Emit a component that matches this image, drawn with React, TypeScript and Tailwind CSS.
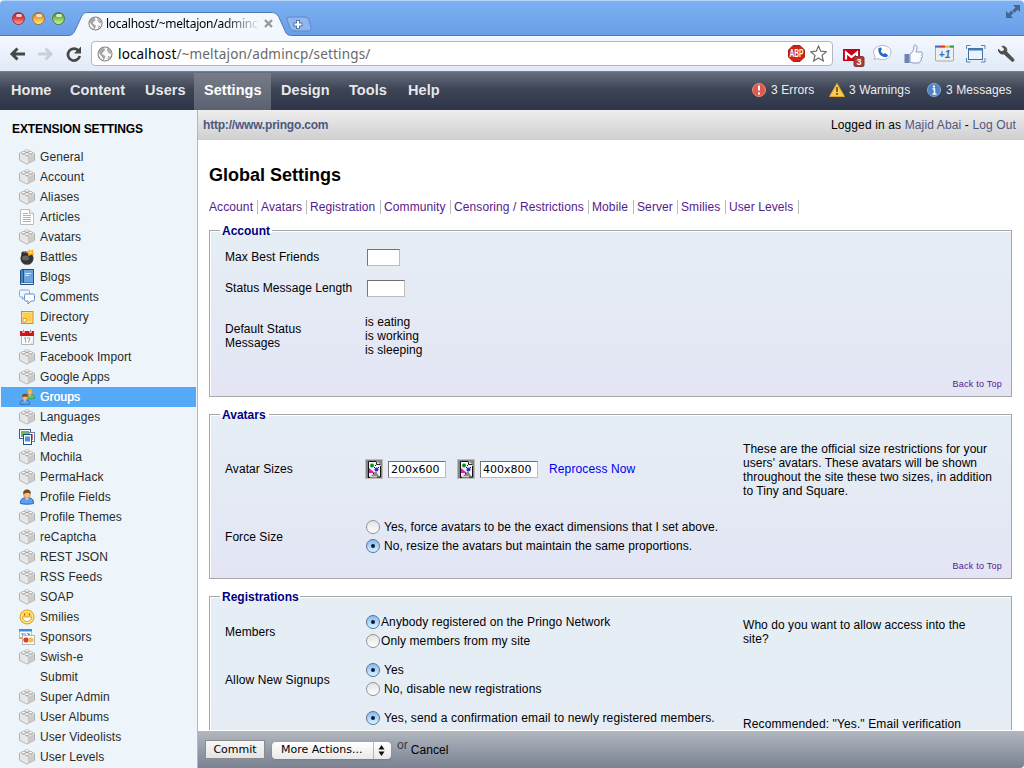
import React from "react";

function Brick() {
  return (
    <svg width="16" height="16" viewBox="0 0 16 16">
      <path d="M8 1 15.400 4.300v7L8 15 .6 11.300v-7Z" fill="#f2f2f2" stroke="#a2a2a2" strokeWidth=".9" strokeLinejoin="round" />
      <path d="M8 7.600v7L1.100 11V4.600Z" fill="#e6e6e6" />
      <path d="M8 7.600v7l6.900-3.600V4.600Z" fill="#cbcbcb" />
      <path d="M1 4.400 8 7.700l7-3.300M8 7.700v6.500" fill="none" stroke="#fff" strokeWidth=".7" />
      {[[8, 2], [4.4, 3.8], [11.6, 3.8], [8, 5.5]].map(([x, y]) => (
        <g key={`${x}-${y}`}>
          <ellipse cx={x} cy={y + 0.7} rx="2" ry="1.300" fill="#a0a0a0" />
          <ellipse cx={x} cy={y - 0.2} rx="1.900" ry="1.200" fill="#fdfdfd" stroke="#a5a5a5" strokeWidth=".5" />
        </g>
      ))}
    </svg>
  );
}

function Person({ x = 0, y = 0, s = 1, hair = "#7a4a22", body = "#5aa0ee", edge = "#2a62bd" }) {
  return (
    <g transform={`translate(${x} ${y}) scale(${s})`}>
      <path d="M1.500 14.500c0-4 1.600-5.500 4-5.500h5c2.400 0 4 1.500 4 5.500-3 .9-10 .9-13 0Z" fill={body} stroke={edge} />
      <path d="m6 9 2 2 2-2" fill="#fff" />
      <ellipse cx="8" cy="5.600" rx="3.300" ry="3.800" fill="#f4bd86" stroke="#b27240" strokeWidth=".6" />
      <path d="M4.300 5.200C3.800 2 5.500.5 8 .5s4.200 1.500 3.700 4.700C10.500 3.400 6.500 4 4.300 5.200Z" fill={hair} />
    </g>
  );
}

function SideIcon({ kind }: { kind: string }) {
  if (kind === "none") return <span className="block size-4" />;
  if (kind === "brick") return <Brick />;
  return (
    <svg width="16" height="16" viewBox="0 0 16 16">
      {kind === "page" && (
        <>
          <path d="M1.500.5h9l4 4v11h-13Z" fill="#fff" stroke="#bdbdbd" />
          <path d="M10.500.5v4h4" fill="#eee" stroke="#bdbdbd" />
          <path d="M4 4.500h5M4 6.500h8M4 8.500h8M4 10.500h8M4 12.500h8" stroke="#b4b4b4" />
        </>
      )}
      {kind === "bomb" && (
        <>
          <circle cx="8" cy="9.300" r="6.500" fill="#353535" />
          <ellipse cx="6.500" cy="9" rx="3.500" ry="2.500" fill="#656565" />
          <circle cx="4.500" cy="4.600" r="2.200" fill="#2a2a2a" />
          <path d="M4.500 4.500c1-2 3-2 4-1" stroke="#666" fill="none" strokeWidth="1.200" />
          <path d="m10 0 1.500 1.500L14.500.5 14 3l1.500 2.500-3 .3L9.500 7 9 4.500 7 3l2.500-.7Z" fill="#ffad18" />
          <circle cx="11.500" cy="3.500" r="1.300" fill="#ffe352" />
        </>
      )}
      {kind === "book" && (
        <>
          <path d="M1.500 1.500 3 .5h11.500v15h-13Z" fill="#4c83bf" stroke="#234f85" />
          <path d="M5 1v12h9V1Z" fill="#6fa4db" />
          <path d="M2 14.500h12" stroke="#dfe9f4" />
          <path d="M4.500 1v13" stroke="#25568f" />
          <path d="M6 4.500h6M6 6.500h4" stroke="#d9e9fb" />
        </>
      )}
      {kind === "comments" && (
        <>
          <path d="M2 1h7q1.500 0 1.500 1.500v4q0 1.500-1.500 1.500H6l-2.500 2.500V8H2Q.5 8 .5 6.500v-4Q.5 1 2 1Z" fill="#eef6ff" stroke="#7fa8d3" />
          <path d="M7 5h7q1.500 0 1.500 1.500v4q0 1.500-1.500 1.500h-2l-3 3v-3H7q-1.500 0-1.500-1.500v-4Q5.500 5 7 5Z" fill="#fff" stroke="#5d8ec4" />
        </>
      )}
      {kind === "note" && (
        <>
          <rect x="2.500" y="2.500" width="11.500" height="12" fill="#fbe08a" stroke="#df8b17" />
          <path d="M4 4h8.500v8.500H7L4 9.500Z" fill="#ffcc4a" />
          <path d="M4 9.500h3V13H4Z" fill="#fff" stroke="#e59b25" />
        </>
      )}
      {kind === "calendar" && (
        <>
          <path d="M2.500 4v11.500h12V4Z" fill="#fbfbfb" stroke="#b5b5b5" />
          <path d="M1 2h14v5H1Z" fill="#d3131b" />
          <path d="M4.500 0v4M11.500 0v4" stroke="#fff" strokeWidth="2" />
          <path d="M4.500 .5v3M11.500 .5v3" stroke="#777" strokeWidth=".8" />
          <path d="m5 9.500 1.500-1v5M8 9h3l-1.500 4.500" fill="none" stroke="#a5a5a5" />
          <path d="m11 15.500 4-4" stroke="#ccc" />
        </>
      )}
      {kind === "groups" && (
        <>
          <Person x={5.5} y={-0.5} s={0.68} hair="#f0b41e" body="#6cc05e" edge="#348a3a" />
          <Person x={0} y={4.5} s={0.74} />
        </>
      )}
      {kind === "person" && <Person />}
      {kind === "media" && (
        <>
          <rect x=".5" y=".5" width="11" height="9" fill="#f4f8ff" stroke="#345c99" />
          <path d="M2 2h8v6H2Z" fill="#73b368" />
          <rect x="10" y="3.500" width="5.500" height="9" fill="#fff" stroke="#6681ad" />
          <path d="M12 5h2v6h-2Z" fill="#e07879" />
          <rect x="4.500" y="5.500" width="8" height="10" fill="#fff" stroke="#244e91" />
          <path d="M6 7.500h5v5H6Z" fill="#4c91d0" />
        </>
      )}
      {kind === "smile" && (
        <>
          <circle cx="8" cy="8" r="7" fill="#ffd34c" stroke="#df9a12" />
          <circle cx="8" cy="8" r="5.800" fill="none" stroke="#ffed99" />
          <path d="M3.500 8h9c0 6-9 6-9 0Z" fill="#fff" stroke="#c98a25" strokeWidth=".7" />
          <path d="M5.500 4.500v2M10.500 4.500v2" stroke="#906018" />
        </>
      )}
      {kind === "cards" && (
        <>
          <rect x=".5" y=".5" width="12" height="9" fill="#fff" stroke="#c9c2ae" />
          <path d="M0 0h13v2.500H0Z" fill="#3e8de2" />
          <path d="M0 8h4v2H0Z" fill="#eba93a" />
          <path d="m2.500 4 1 2 1-2M6 4v2.500M8 4.500h1.500M9 6.500l1-2 1 2" stroke="#4f70a7" fill="none" strokeWidth=".8" />
          <rect x="3.500" y="6.500" width="12" height="9" fill="#fff" stroke="#b7b7b7" />
          <rect x="4.500" y="8.500" width="5" height="5" rx="1.800" fill="#e9372b" />
          <rect x="9.500" y="8.500" width="5" height="5" rx="1.800" fill="#f7c23d" />
        </>
      )}
    </svg>
  );
}

const sideItems: [string, string][] = [
  ["General", "brick"], ["Account", "brick"], ["Aliases", "brick"], ["Articles", "page"], ["Avatars", "brick"],
  ["Battles", "bomb"], ["Blogs", "book"], ["Comments", "comments"], ["Directory", "note"], ["Events", "calendar"],
  ["Facebook Import", "brick"], ["Google Apps", "brick"], ["Groups", "groups"], ["Languages", "brick"], ["Media", "media"],
  ["Mochila", "brick"], ["PermaHack", "brick"], ["Profile Fields", "person"], ["Profile Themes", "brick"], ["reCaptcha", "brick"],
  ["REST JSON", "brick"], ["RSS Feeds", "brick"], ["SOAP", "brick"], ["Smilies", "smile"], ["Sponsors", "cards"],
  ["Swish-e", "brick"], ["Submit", "none"], ["Super Admin", "brick"], ["User Albums", "brick"], ["User Videolists", "brick"], ["User Levels", "brick"],
];

function Globe({ size }: { size: number }) {
  return (
    <svg width={size} height={size} viewBox="0 0 16 16" className="shrink-0">
      <circle cx="8" cy="8" r="7" fill="#fafafa" stroke="#808080" strokeWidth="1.100" />
      <path d="m2.500 4 2.500-2 2.500.5.5 2-2 1.500-1 1.500 1.500 1.500 2 1-.5 2-1.500 2.500-1-3-2-2.500-1.500-2Z" fill="#a5a5a5" />
      <path d="m10 2 3 2 1.500 3-1.500 1-2-1.500-1-2ZM11 10l2.500.5-2 2.500-1 .5Z" fill="#b0b0b0" />
    </svg>
  );
}

function TrafficLight({ color }: { color: "red" | "yellow" | "green" }) {
  const c = {
    red: "border-[#96343d] from-[#a7202d] via-[#e5404a] to-[#ff9c99]",
    yellow: "border-[#a17530] from-[#b0721d] via-[#f4ad3c] to-[#ffe77d]",
    green: "border-[#4d7f3c] from-[#44812a] via-[#82c44e] to-[#ccf59a]",
  }[color];
  return (
    <span className={`flex size-[13px] justify-center rounded-full border bg-linear-to-b ${c}`}>
      <span className="mt-px h-[3px] w-[6px] rounded-full bg-white/75" />
    </span>
  );
}

function Chrome() {
  return (
    <header className="shrink-0 font-['Noto_Sans','Open_Sans',sans-serif]">
      <div className="relative flex h-9 items-start rounded-t-[4px] border-t border-[#b4d4fa] bg-linear-to-b from-[#7db0f3] to-[#699fe8]">
        <div className="ml-[12px] mt-[11px] flex gap-[7px]">
          <TrafficLight color="red" />
          <TrafficLight color="yellow" />
          <TrafficLight color="green" />
        </div>
        <svg className="absolute left-0 top-0" width="1024" height="36">
          <path d="M0 34.500h68c5 0 6-3 8-7l5-11c2-4 3-5 7-5h183c4 0 6 1 8 5l5 11c2 5 3 7 8 7h732v1.500H0Z" fill="#f3f7fe" stroke="#4d78b5" />
          <path d="M0 35.500h1024" stroke="#f5f8fe" strokeWidth="1" />
          <path d="M289 16h16q3 0 4 3l2 7q1 4-3 4h-13q-4 0-5-3l-3-8q-1-3 2-3Z" fill="#8fb7ee" stroke="#5b89c8" />
          <path d="M298 19v9M293.500 23.500h9" stroke="#5476a6" strokeWidth="4" />
          <path d="M298 20v7M294.500 23.500h7" stroke="#fff" strokeWidth="2" />
          <g fill="#46658f">
            <path d="M1013 4h7v7l-2.300-2.300-3 3-2.300-2.300 3-3Z" />
            <path d="M1006 10v7h7l-2.300-2.300 3-3-2.300-2.300-3 3Z" />
          </g>
        </svg>
        <div className="absolute left-[88px] top-[14px] flex h-[17px] w-[187px] items-center text-[12px] leading-[17px]">
          <Globe size={15} />
          <span className="ml-[3px] w-[155px] overflow-hidden bg-linear-to-r from-black from-75% to-transparent bg-clip-text tracking-[-0.250px] whitespace-nowrap text-transparent">localhost/~meltajon/adminc</span>
          <svg width="9" height="9" viewBox="0 0 9 9" className="ml-[3px] shrink-0"><path d="m1 1 7 7M8 1 1 8" stroke="#979797" strokeWidth="2.200" /></svg>
        </div>
      </div>
      <div className="flex h-[35px] items-center bg-linear-to-b from-[#f4f8ff] to-[#e1eaf8] pl-[9px]">
        <svg width="75" height="22" viewBox="0 0 75 22" fill="none" strokeWidth="3">
          <path d="M16 11H3M8.500 5.500 3 11l5.500 5.500" stroke="#474747" />
          <path d="M29 11h13M36.500 5.500 42 11l-5.500 5.500" stroke="#cbd0d7" />
          <path d="M69.800 8a6 6 0 1 0 1 5" stroke="#474747" strokeWidth="2.700" />
          <path d="M72 3.500v7h-7Z" fill="#474747" />
        </svg>
        <div className="ml-[7px] flex h-[25px] w-[742px] items-center rounded-[4px] border border-[#b2b8c1] bg-white pl-[5px] pr-[5px]">
          <Globe size={16} />
          <span className="ml-[5px] grow text-[13.500px] leading-5 tracking-[0.160px] text-[#686868]"><span className="text-black">localhost</span>/~meltajon/admincp/settings/</span>
          <svg width="17" height="17" viewBox="0 0 17 17">
            <path d="M5 .5h7L16.500 5v7L12 16.500H5L.5 12V5Z" fill="#ce2516" stroke="#af2014" />
            <text x="8.500" y="12.300" textAnchor="middle" fill="white" fontSize="10.500" fontWeight="700" textLength="14" lengthAdjust="spacingAndGlyphs" fontFamily="Liberation Sans, sans-serif">ABP</text>
          </svg>
          <svg width="17" height="17" viewBox="0 0 17 17" className="ml-[5px]"><path d="m8.500 1 2.200 5.200 5.600.5-4.300 3.700 1.300 5.500-4.800-3-4.800 3 1.300-5.500L.7 6.700l5.600-.5Z" fill="white" stroke="#6d6d6d" strokeWidth="1.200" /></svg>
        </div>
        <svg width="181" height="28" viewBox="0 0 181 28" className="ml-[10px]">
          <rect x="0" y="9" width="17" height="12" fill="#c70017" />
          <path d="M3 19.500v-7l5.500 4.500 5.500-4.500v7" fill="none" stroke="#fff" strokeWidth="2.200" />
          <rect x="11" y="16.500" width="10" height="10" rx="1.500" fill="#ab3a3a" stroke="#873030" />
          <text x="16" y="25" textAnchor="middle" fill="#fff" fontSize="9" fontWeight="700" fontFamily="Liberation Sans, sans-serif">3</text>
          <path d="M39.500 5.500c5 0 8.500 3 8.500 7s-3.500 7-8.500 7c-2 0-3-.3-4.500-1l-4 1 1.300-3c-4.300-5-.3-11 7.200-11Z" fill="#fff" stroke="#b0b8c6" />
          <path d="M35.500 8c-1 6 3 9.500 8.500 9l1-2-3-2-1.300 1q-2.500-1-3-3.500l1.300-1-1-2Z" fill="#236acb" />
          <path d="M61.500 14h5v9h-5Z" fill="#6d82b1" />
          <path d="M67 14c3-2 4-4 4-8 0-2 3-1 3 1 0 3-.7 4-1 5h5c2 0 2 3 .5 3 1.500 1 1 3-.5 3 1 2 0 3-1 3 .5 1 0 2-2 2h-5l-3-1Z" fill="#f8faff" stroke="#8c9dbe" />
          <path d="M92.500 7h18v13q0 1-1 1h-16q-1 0-1-1Z" fill="#eee" stroke="#aaa" />
          <path d="M92 5.500h5v2h-5Z" fill="#3770d2" /><path d="M97 5.500h5v2h-5Z" fill="#d53531" /><path d="M102 5.500h5v2h-5Z" fill="#f2bc22" /><path d="M107 5.500h4v2h-4Z" fill="#2d9650" />
          <text x="101.500" y="18" textAnchor="middle" fill="#326bc4" fontSize="10" fontStyle="italic" fontWeight="700" fontFamily="Liberation Sans, sans-serif">+1</text>
          <rect x="125.500" y="8.500" width="14" height="11" fill="#e9f4ff" stroke="#426f9d" />
          <path d="M125 9.500h15" stroke="#497aac" strokeWidth="2" />
          <path d="M123.500 9V5.500h4M138 5.500h4V9M123.500 18v4h4M138 22h4v-4" fill="none" stroke="#5686b6" />
          <path d="m163 13-1.200 1.200 7.500 6.900c1.300 1.200 3-.7 1.800-2l-7-7.300c1-3-1-6.300-4.600-5.500l2.700 2.800-1 2-2.700.6-2.500-2.500c-.5 3 2.500 5.500 5 4.800Z" fill="#4e4e4e" stroke="#4e4e4e" transform="translate(-.5)" />
        </svg>
      </div>
    </header>
  );
}

function NavItem({ label, className, active = false }: { label: string; className: string; active?: boolean }) {
  return <a className={`flex items-center pl-[10px] pb-px text-[14.500px] font-bold tracking-[0.050px] ${className} ${active ? "bg-linear-to-b from-[#767d88] to-[#5b6170] text-white" : "text-[#e7e7e8]"}`}>{label}</a>;
}

function StatusIcon({ kind }: { kind: "error" | "warning" | "info" }) {
  return (
    <svg width="16" height="16" viewBox="0 0 16 16" className="mt-px">
      {kind === "warning" ? <><path d="M8 1.500 15.500 14.500H.5Z" fill="#f9cd4b" stroke="#e0a72b" strokeLinejoin="round" /><path d="M8 5v5M8 11v2" stroke="#665532" strokeWidth="1.700" /></> :
        <><circle cx="8" cy="8" r="6.500" fill={kind === "error" ? "#df594c" : "#4b84c6"} stroke={kind === "error" ? "#ef8b7c" : "#86aadb"} />{kind === "error" ? <path d="M8 3.500v5M8 10.500v2" stroke="#fff" strokeWidth="2" /> : <><path d="M8 3.500v2" stroke="#fff" strokeWidth="2" /><path d="M6.500 7h2v5M6.500 12h4" fill="none" stroke="#fff" strokeWidth="1.500" /></>}</>}
    </svg>
  );
}

function Radio({ on = false }: { on?: boolean }) {
  return (
    <span className={`flex size-[14px] shrink-0 items-center justify-center rounded-full border ${on ? "border-[#56719b] bg-linear-to-b from-[#89b9ef] to-[#d6f3ff]" : "border-[#929292] bg-linear-to-b from-[#e3e3e3] to-white"}`}>
      {on && <span className="size-1 rounded-full bg-[#101c34]" />}
    </span>
  );
}

function Choice({ on = false, tight = false, children }: { on?: boolean; tight?: boolean; children: React.ReactNode }) {
  return <label className={`flex h-[19px] items-center whitespace-nowrap pl-px last:mb-[2px] ${tight ? "gap-px tracking-[0.100px]" : "gap-1"}`}><Radio on={on} />{children}</label>;
}

function Panel({ title, legend, className, back = true, children }: { title: string; legend: string; className: string; back?: boolean; children: React.ReactNode }) {
  return (
    <section className={`relative shrink-0 border border-[#a6a6a6] ${className}`}>
      <h2 className={`absolute -top-2 left-[10px] h-4 bg-linear-to-b from-white from-[10px] to-transparent to-[10px] pl-[2px] leading-4 font-bold whitespace-nowrap text-[#000080] ${legend}`}>{title}</h2>
      <div className="flex h-full flex-col border-t border-l border-white bg-linear-to-b from-[#e6eef5] to-[#e3e5f4] pt-[10px] pl-[14px]">{children}</div>
      {back && <a className="absolute right-[9px] bottom-[6px] text-[9px] leading-3 tracking-[0.250px] text-[#551a8b]">Back to Top</a>}
    </section>
  );
}

function Row({ label, help, className, children }: { label: React.ReactNode; help?: React.ReactNode; className: string; children: React.ReactNode }) {
  return (
    <div className={`grid grid-cols-[140px_378px_262px] items-center leading-[14px] tracking-[0.060px] ${className}`}>
      <div>{label}</div><div>{children}</div><div>{help}</div>
    </div>
  );
}

const field = "border border-[#bdbdbd] border-t-[#707070] border-l-[#777] bg-white";

function SizeButton() {
  return (
    <svg width="18" height="20" viewBox="0 0 18 20">
      <path d="M0 0h18v20H0Z" fill="#bdbdbd" />
      <path d="M1 1h16v18H1Z" fill="#858585" />
      <path d="M3 2h9l4 4v12H3Z" fill="#c9c9c9" />
      <path d="M3.500 18V2.500H11M15.500 7v11H12M5 18.500H3" fill="none" stroke="#111" />
      <path d="M4 3h8l3 3v11H4Z" fill="#f4f4f4" />
      <path d="M11.500 2.500v3h4" fill="#ddd" stroke="#222" />
      <circle cx="7" cy="6.500" r="1.900" fill="#078b20" /><circle cx="11.500" cy="10.500" r="2" fill="#1739d7" /><path d="M4 9v5h6Z" fill="#ed15bc" /><path d="m6 17 5-5 3 5Z" fill="#898989" />
      <path d="M10 6h1v1h-1ZM9 8h1v1H9ZM13 8h1v1h-1ZM8 14h1v1H8Z" fill="#111" />
    </svg>
  );
}

export default function App() {
  const links: [string, string][] = [["Account", "w-[48px]"], ["Avatars", "w-[45px]"], ["Registration", "w-[70px]"], ["Community", "w-[66px]"], ["Censoring / Restrictions", "w-[134px]"], ["Mobile", "w-[41px]"], ["Server", "w-[40px]"], ["Smilies", "w-[44px]"], ["User Levels", "w-[69px]"]];
  return (
    <div className="flex h-[768px] w-[1024px] flex-col overflow-hidden bg-white font-['Liberation_Sans',Arial,sans-serif] text-[12px] text-black">
      <Chrome />
      <nav className="flex h-[39px] shrink-0 justify-between border-t border-[#777d89] bg-linear-to-b from-[#686f7d] via-[#3d4456] via-45% to-[#2f3548] pt-px pl-px">
        <div className="flex">
          <NavItem label="Home" className="w-[59px]" /><NavItem label="Content" className="w-[75px]" /><NavItem label="Users" className="w-[59px]" /><NavItem label="Settings" className="w-[77px]" active /><NavItem label="Design" className="w-[68px]" /><NavItem label="Tools" className="w-[59px]" /><NavItem label="Help" className="w-[51px]" />
        </div>
        <div className="flex items-center pb-[4px] text-[12px] tracking-[0.100px] text-[#eee]">
          <div className="flex w-[78px] gap-1"><StatusIcon kind="error" />3 Errors</div>
          <div className="flex w-[97px] gap-1"><StatusIcon kind="warning" />3 Warnings</div>
          <div className="flex w-[98px] gap-1"><StatusIcon kind="info" />3 Messages</div>
        </div>
      </nav>
      <div className="flex min-h-0 grow">
        <aside className="w-[198px] shrink-0 border-r border-[#b8b8b8] bg-[#edf5fa] pt-[11px]">
          <h2 className="mb-[10px] pl-3 text-[12px] leading-4 font-bold tracking-[-0.100px] whitespace-nowrap">EXTENSION SETTINGS</h2>
          <ul>
            {sideItems.map(([name, icon]) => (
              <li key={name} className={`ml-px mr-px flex h-5 items-center gap-[5px] pl-[18px] leading-5 tracking-[0.100px] ${name === "Groups" ? "bg-[#54aaf6] text-white [text-shadow:0.300px_0_0_white]" : "text-[#292929]"}`}><SideIcon kind={icon} />{name}</li>
            ))}
          </ul>
        </aside>
        <div className="flex min-w-0 grow flex-col">
          <div className="flex h-[30px] shrink-0 items-center justify-between bg-linear-to-b from-[#eeeeef] to-[#cfcfd0] pr-2 pl-[5px]">
            <a className="font-bold tracking-[-0.200px] text-[#4c5880]">http://www.pringo.com</a>
            <span className="tracking-[0.130px]">Logged in as <a className="text-[#4c5880]">Majid Abai</a> - <a className="text-[#4c5880]">Log Out</a></span>
          </div>
          <main className="flex min-h-0 grow flex-col overflow-hidden pl-[11px]">
            <h1 className="mt-[24px] h-[22px] shrink-0 text-[18px] leading-[22px] font-bold">Global Settings</h1>
            <div className="mt-[14px] flex h-[14px] shrink-0 tracking-[0.100px] text-[#551a8b]">
              {links.map(([name, w], i) => <a key={name} className={`box-content border-r border-[#bbb] leading-[14px] whitespace-nowrap ${i ? "pl-[3px]" : ""} ${w}`}>{name}</a>)}
            </div>
            <Panel title="Account" legend="w-[52px]" className="mt-[16px] h-[167px] w-[803px]">
              <Row className="h-[30px]" label="Max Best Friends"><div className={`ml-[2px] h-[17px] w-[33px] ${field}`} /></Row>
              <Row className="h-[32px]" label="Status Message Length"><div className={`ml-[2px] mt-px h-[17px] w-[38px] ${field}`} /></Row>
              <Row className="h-[64px]" label={<>Default Status<br />Messages</>}>is eating<br />is working<br />is sleeping</Row>
            </Panel>
            <Panel title="Avatars" legend="w-[49px]" className="mt-[17px] h-[165px] w-[803px]">
              <Row className="h-[86px]" label="Avatar Sizes" help={<div className="pt-[2px]">These are the official size restrictions for your<br />users' avatars. These avatars will be shown<br />throughout the site these two sizes, in addition<br />to Tiny and Square.</div>}>
                <div className="flex items-center font-['DejaVu_Sans',sans-serif] text-[11px] tracking-normal">
                  <SizeButton /><div className={`mr-[11px] ml-[5px] h-[17px] w-[58px] pl-[2px] leading-[15px] ${field}`}>200x600</div>
                  <SizeButton /><div className={`mr-[11px] ml-[5px] h-[17px] w-[58px] pl-[2px] leading-[15px] ${field}`}>400x800</div>
                  <a className="font-['Liberation_Sans',sans-serif] text-[12px] tracking-[0.130px] text-[#0000ee]">Reprocess Now</a>
                </div>
              </Row>
              <Row className="h-[50px]" label="Force Size"><Choice>Yes, force avatars to be the exact dimensions that I set above.</Choice><Choice on>No, resize the avatars but maintain the same proportions.</Choice></Row>
            </Panel>
            <Panel title="Registrations" legend="w-[80px]" back={false} className="mt-[17px] h-[760px] w-[803px]">
              <Row className="h-[48px]" label="Members" help={<>Who do you want to allow access into the<br />site?</>}><Choice on tight>Anybody registered on the Pringo Network</Choice><Choice tight>Only members from my site</Choice></Row>
              <Row className="h-[48px] tracking-[0.120px]" label="Allow New Signups"><Choice on>Yes</Choice><Choice>No, disable new registrations</Choice></Row>
              <Row className="h-[48px] tracking-[0.120px]" label="" help={<span className="block pb-[8px]">Recommended: "Yes." Email verification</span>}><Choice on>Yes, send a confirmation email to newly registered members.</Choice><span className="block h-[21px]" /></Row>
            </Panel>
          </main>
          <footer className="flex h-[38px] shrink-0 items-center rounded-br-[4px] border-t border-white bg-linear-to-b from-[#b2b7bf] to-[#7a8292] pl-[7px]">
            <button className="h-[19px] w-[60px] border border-[#8c8c8c] bg-linear-to-b from-[#f7f7f7] to-[#e4e4e4] font-['DejaVu_Sans',sans-serif] text-[11px] leading-none">Commit</button>
            <div className="ml-[7px] mt-px flex h-[17px] w-[119px] items-center rounded-[4px] bg-linear-to-b from-white to-[#e9e9e9] pl-[9px] shadow-sm">
              <span className="w-[92px] font-['DejaVu_Sans',sans-serif] text-[11px]">More Actions...</span>
              <svg width="17" height="17"><path d="M.5 0v17" stroke="#b5b5b5" /><path d="m8.500 3 3 4.500h-6ZM8.500 14l3-4.500h-6Z" fill="#111" /></svg>
            </div>
            <span className="mb-[9px] ml-[6px] text-[#333a48]">or</span><a className="ml-[3px] tracking-[0.100px]">Cancel</a>
          </footer>
        </div>
      </div>
    </div>
  );
}
